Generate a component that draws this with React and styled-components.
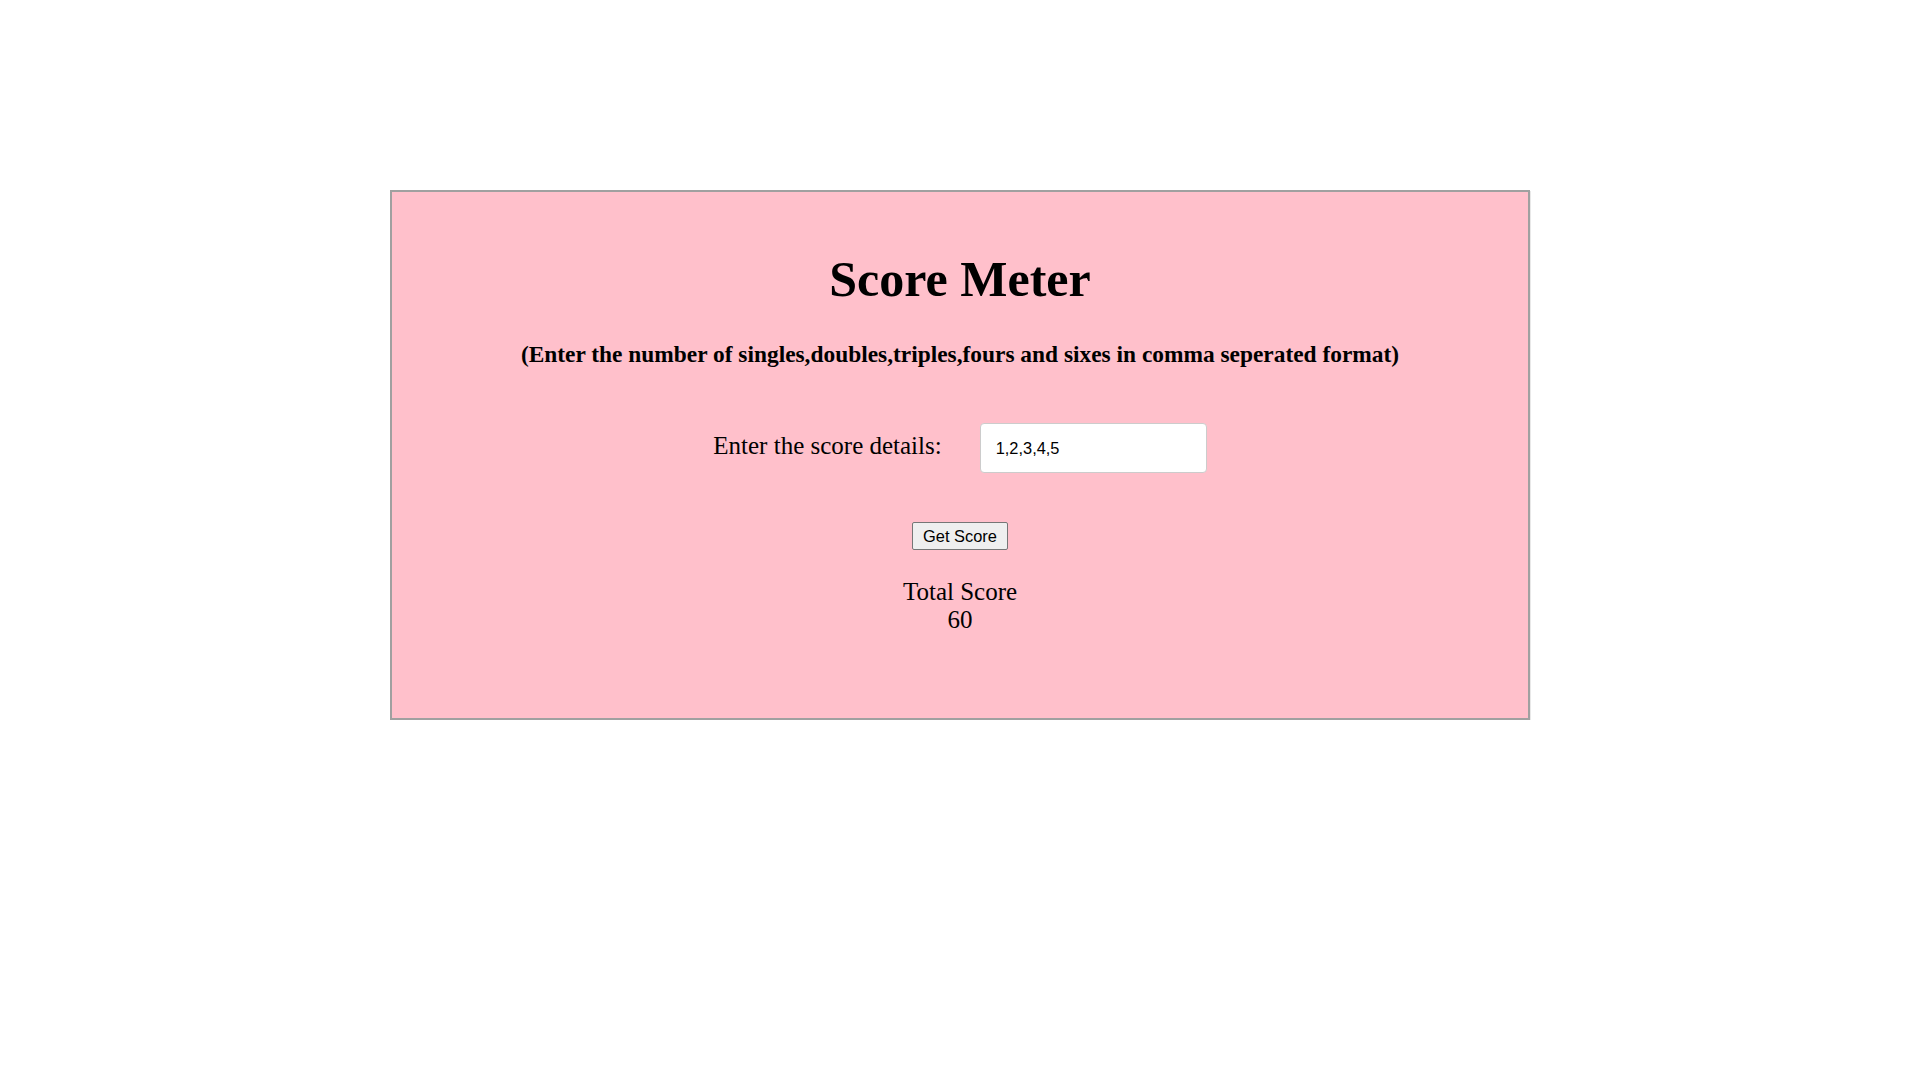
import React, { useState } from 'react';
import styled, { createGlobalStyle } from 'styled-components';

const GlobalStyle = createGlobalStyle`
    html, body {
        margin: 0;
        padding: 0;
        background: #ffffff;
    }
    body {
        font-family: "Liberation Serif", "Times New Roman", serif;
        color: #000000;
    }
`

const Card = styled.div`
    box-sizing: border-box;
    width: 1140px;
    height: 530px;
    margin: 190px auto 0 auto;
    padding-top: 58px;
    background: pink;
    border: 2px solid #a0a0a0;
    box-shadow: 1px 1px 0 #e8e8e8;
    display: flex;
    flex-direction: column;
    align-items: center;
`

const Title = styled.h1`
    margin: 0;
    font-size: 50px;
    line-height: 58px;
    font-weight: bold;
`

const Hint = styled.h3`
    margin: 33px 0 0 0;
    font-size: 23.4px;
    line-height: 27px;
    font-weight: bold;
`

const Row = styled.div`
    margin-top: 55px;
    display: flex;
    align-items: baseline;
    gap: 38px;
`

const Label = styled.label`
    font-size: 25px;
    line-height: 28px;
`

const Input = styled.input`
    box-sizing: border-box;
    width: 227px;
    height: 50px;
    padding: 0 15px;
    font-family: "Liberation Sans", Arial, sans-serif;
    font-size: 16.4px;
    color: #000;
    background: #fff;
    border: 1px solid #cccccc;
    border-radius: 4px;
    outline: none;
`

const Button = styled.button`
    margin-top: 49px;
    box-sizing: border-box;
    height: 28px;
    padding: 0 10px;
    font-family: "Liberation Sans", Arial, sans-serif;
    font-size: 16.4px;
    color: #000;
    background: #efefef;
    border: 1px solid #767676;
    border-radius: 2px;
`

const Result = styled.div`
    margin-top: 28px;
    font-size: 25px;
    line-height: 27.5px;
    text-align: center;
`

const calcScore = (str) => {
    const runs = [1, 2, 3, 4, 6];
    return str.split(',').reduce((sum, n, i) => sum + (parseInt(n, 10) || 0) * (runs[i] || 0), 0);
}

export default function App() {
    const [value, setValue] = useState('1,2,3,4,5');
    const [score, setScore] = useState(60);

    return (
        <>
            <GlobalStyle/>
            <Card>
                <Title>Score Meter</Title>
                <Hint>(Enter the number of singles,doubles,triples,fours and sixes in comma seperated format)</Hint>
                <Row>
                    <Label htmlFor="score">Enter the score details:</Label>
                    <Input id="score" value={value} onChange={e => setValue(e.target.value)}/>
                </Row>
                <Button onClick={() => setScore(calcScore(value))}>Get Score</Button>
                <Result>
                    Total Score
                    <br/>
                    {score}
                </Result>
            </Card>
        </>
    )
}
